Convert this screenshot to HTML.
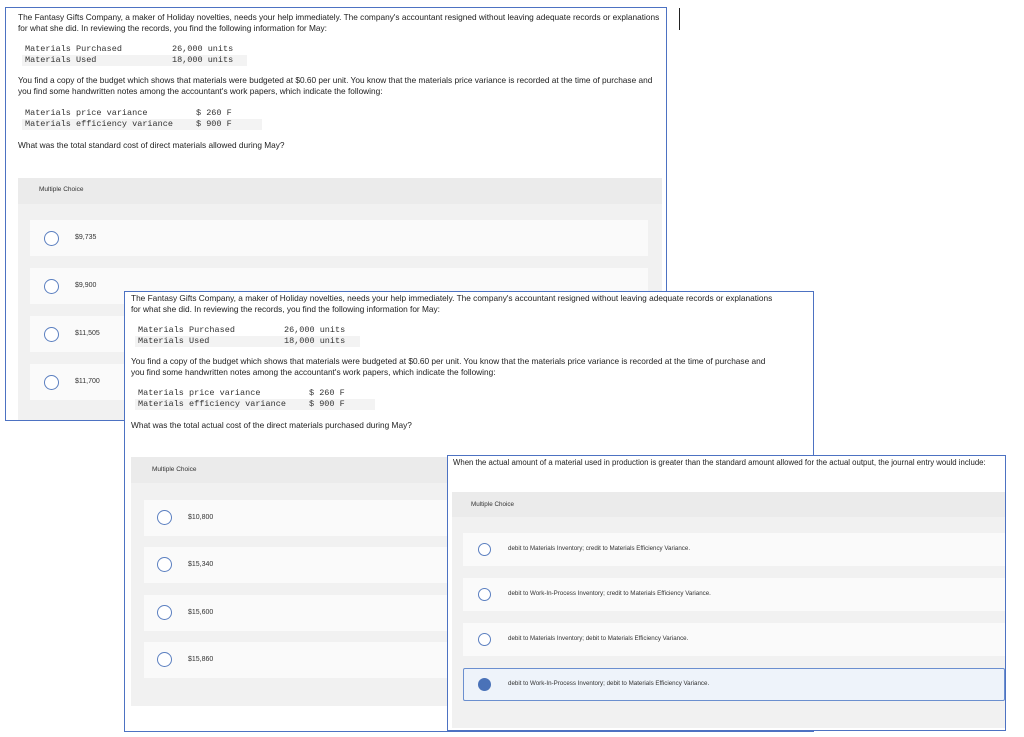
<!DOCTYPE html>
<html><head><meta charset="utf-8"><style>
*{margin:0;padding:0;box-sizing:border-box}
body{width:1024px;height:737px;background:#fff;position:relative;overflow:hidden;font-family:"Liberation Sans",sans-serif;color:#222}
.p{position:absolute;background:#fff;border:1px solid #4d72c2}
.a{position:absolute;white-space:nowrap}
.t{font-size:8.3px;line-height:11px}
.m{font-family:"Liberation Mono",monospace;font-size:8.5px;line-height:11px;color:#333}
.g{position:absolute;background:#f1f1f1}
.o{position:absolute;background:#fafafa}
.r{position:absolute;border:1.2px solid #5b7fc0;border-radius:50%;background:#fff}
.h{font-size:6.5px;color:#333}
.s{font-size:7px;color:#333}
</style></head><body>
<div class="a" style="left:679px;top:8px;width:1px;height:22px;background:#222"></div>

<!-- panel 1 -->
<div class="p" style="left:5px;top:7px;width:662px;height:414px"></div>
<div class="a t" style="left:18px;top:12px">The Fantasy Gifts Company, a maker of Holiday novelties, needs your help immediately. The company's accountant resigned without leaving adequate records or explanations<br>for what she did. In reviewing the records, you find the following information for May:</div>
<div class="a" style="left:22px;top:55px;width:225px;height:11px;background:#f3f3f3"></div>
<div class="a m" style="left:25px;top:44px">Materials Purchased<br>Materials Used</div>
<div class="a m" style="left:172px;top:44px">26,000 units<br>18,000 units</div>
<div class="a t" style="left:18px;top:75px">You find a copy of the budget which shows that materials were budgeted at $0.60 per unit. You know that the materials price variance is recorded at the time of purchase and<br>you find some handwritten notes among the accountant's work papers, which indicate the following:</div>
<div class="a" style="left:22px;top:119px;width:240px;height:11px;background:#f3f3f3"></div>
<div class="a m" style="left:25px;top:108px">Materials price variance<br>Materials efficiency variance</div>
<div class="a m" style="left:196px;top:108px">$ 260 F<br>$ 900 F</div>
<div class="a t" style="left:18px;top:140px">What was the total standard cost of direct materials allowed during May?</div>
<div class="g" style="left:18px;top:178px;width:644px;height:242px"></div>
<div class="g" style="left:18px;top:178px;width:644px;height:26px;background:#ebebeb"></div>
<div class="a h" style="left:39px;top:186px">Multiple Choice</div>
<div class="o" style="left:30px;top:220px;width:618px;height:36px"></div>
<div class="o" style="left:30px;top:268px;width:618px;height:36px"></div>
<div class="o" style="left:30px;top:316px;width:618px;height:36px"></div>
<div class="o" style="left:30px;top:364px;width:618px;height:36px"></div>
<div class="r" style="left:44px;top:231px;width:15px;height:15px"></div>
<div class="r" style="left:44px;top:279px;width:15px;height:15px"></div>
<div class="r" style="left:44px;top:327px;width:15px;height:15px"></div>
<div class="r" style="left:44px;top:375px;width:15px;height:15px"></div>
<div class="a s" style="left:75px;top:234px">$9,735</div>
<div class="a s" style="left:75px;top:282px">$9,900</div>
<div class="a s" style="left:75px;top:330px">$11,505</div>
<div class="a s" style="left:75px;top:378px">$11,700</div>

<!-- panel 2 -->
<div class="p" style="left:124px;top:291px;width:690px;height:441px"></div>
<div class="a t" style="left:131px;top:293px">The Fantasy Gifts Company, a maker of Holiday novelties, needs your help immediately. The company's accountant resigned without leaving adequate records or explanations<br>for what she did. In reviewing the records, you find the following information for May:</div>
<div class="a" style="left:135px;top:336px;width:225px;height:11px;background:#f3f3f3"></div>
<div class="a m" style="left:138px;top:325px">Materials Purchased<br>Materials Used</div>
<div class="a m" style="left:284px;top:325px">26,000 units<br>18,000 units</div>
<div class="a t" style="left:131px;top:356px">You find a copy of the budget which shows that materials were budgeted at $0.60 per unit. You know that the materials price variance is recorded at the time of purchase and<br>you find some handwritten notes among the accountant's work papers, which indicate the following:</div>
<div class="a" style="left:135px;top:399px;width:240px;height:11px;background:#f3f3f3"></div>
<div class="a m" style="left:138px;top:388px">Materials price variance<br>Materials efficiency variance</div>
<div class="a m" style="left:309px;top:388px">$ 260 F<br>$ 900 F</div>
<div class="a t" style="left:131px;top:420px">What was the total actual cost of the direct materials purchased during May?</div>
<div class="g" style="left:131px;top:457px;width:682px;height:249px"></div>
<div class="g" style="left:131px;top:457px;width:682px;height:26px;background:#ebebeb"></div>
<div class="a h" style="left:152px;top:466px">Multiple Choice</div>
<div class="o" style="left:144px;top:500px;width:669px;height:36px"></div>
<div class="o" style="left:144px;top:547px;width:669px;height:36px"></div>
<div class="o" style="left:144px;top:595px;width:669px;height:36px"></div>
<div class="o" style="left:144px;top:642px;width:669px;height:36px"></div>
<div class="r" style="left:157px;top:510px;width:15px;height:15px"></div>
<div class="r" style="left:157px;top:557px;width:15px;height:15px"></div>
<div class="r" style="left:157px;top:605px;width:15px;height:15px"></div>
<div class="r" style="left:157px;top:652px;width:15px;height:15px"></div>
<div class="a s" style="left:188px;top:514px">$10,800</div>
<div class="a s" style="left:188px;top:561px">$15,340</div>
<div class="a s" style="left:188px;top:609px">$15,600</div>
<div class="a s" style="left:188px;top:656px">$15,860</div>

<!-- panel 3 -->
<div class="p" style="left:447px;top:455px;width:559px;height:276px"></div>
<div class="a" style="left:453px;top:458px;font-size:7.8px;color:#222">When the actual amount of a material used in production is greater than the standard amount allowed for the actual output, the journal entry would include:</div>
<div class="g" style="left:452px;top:492px;width:553px;height:236px"></div>
<div class="g" style="left:452px;top:492px;width:553px;height:25px;background:#ebebeb"></div>
<div class="a h" style="left:471px;top:501px;font-size:6.3px">Multiple Choice</div>
<div class="o" style="left:463px;top:533px;width:542px;height:33px"></div>
<div class="o" style="left:463px;top:578px;width:542px;height:33px"></div>
<div class="o" style="left:463px;top:623px;width:542px;height:33px"></div>
<div class="a" style="left:463px;top:668px;width:542px;height:33px;background:#eef3fa;border:1px solid #6b8fcf;border-radius:2px"></div>
<div class="r" style="left:478px;top:543px;width:13px;height:13px"></div>
<div class="r" style="left:478px;top:588px;width:13px;height:13px"></div>
<div class="r" style="left:478px;top:633px;width:13px;height:13px"></div>
<div class="r" style="left:478px;top:678px;width:13px;height:13px;background:#4a72b8;border-color:#4a72b8"></div>
<div class="a s" style="left:508px;top:545px;font-size:6.2px">debit to Materials Inventory; credit to Materials Efficiency Variance.</div>
<div class="a s" style="left:508px;top:590px;font-size:6.2px">debit to Work-In-Process Inventory; credit to Materials Efficiency Variance.</div>
<div class="a s" style="left:508px;top:635px;font-size:6.2px">debit to Materials Inventory; debit to Materials Efficiency Variance.</div>
<div class="a s" style="left:508px;top:680px;font-size:6.2px">debit to Work-In-Process Inventory; debit to Materials Efficiency Variance.</div>
</body></html>
